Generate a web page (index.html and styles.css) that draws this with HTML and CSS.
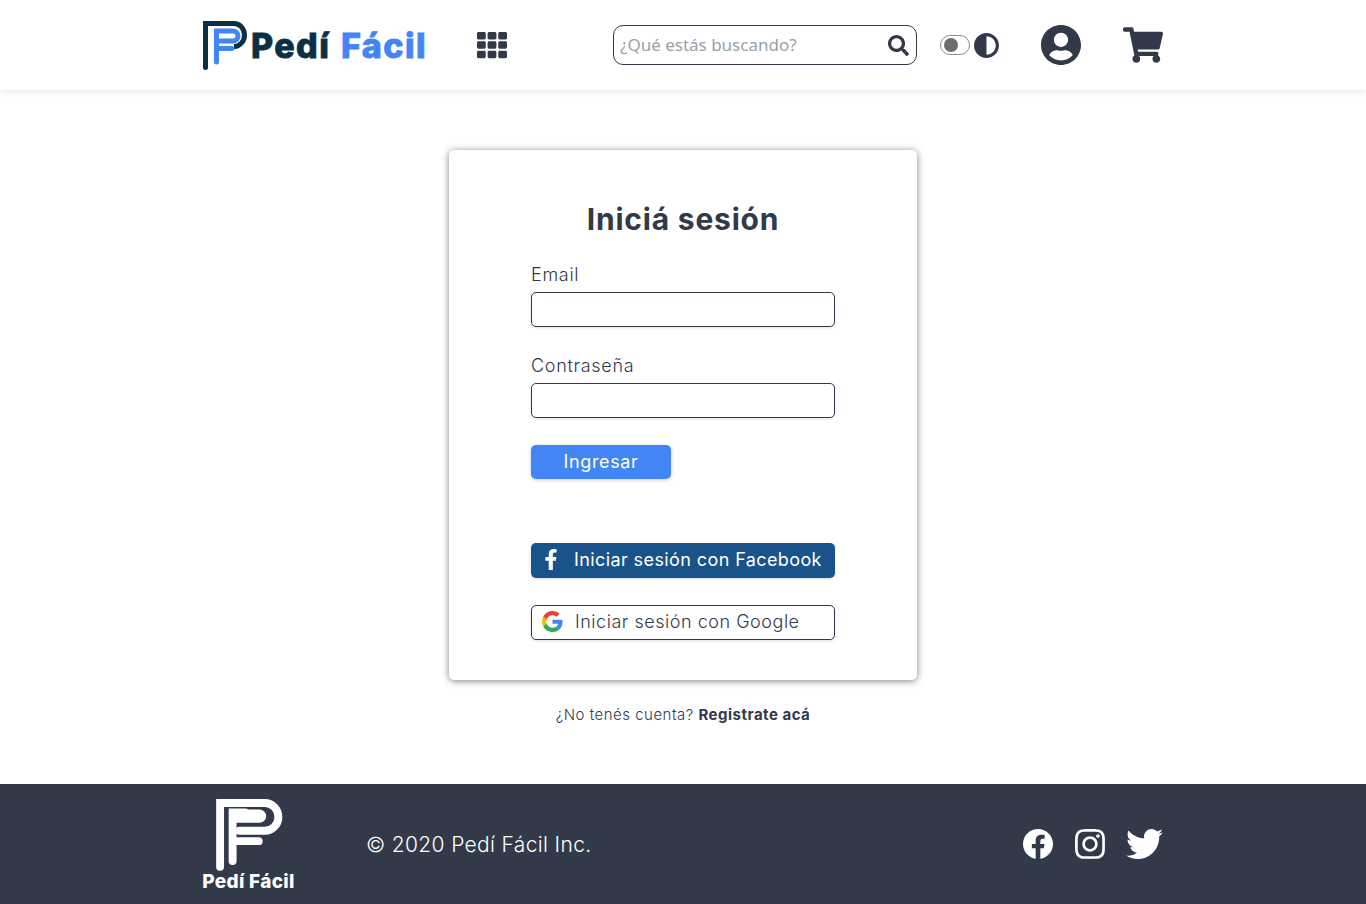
FILE: index.html
```html
<!DOCTYPE html>
<html lang="es">
<head>
    <meta charset="UTF-8">
    <meta name="viewport" content="width=device-width, initial-scale=1.0">
    <title>Pedí Fácil</title>
    <link rel="stylesheet" href="styles.css">
</head>
<body>

<!-- Barra superior -->
<header class="topbar">
    <div class="wrap topbar-row">
        <a class="brand" href="#">
            <svg class="brand-mark" viewBox="0 0 45 49" stroke-width="5" stroke-linecap="round">
                <path class="mark-dark" d="M2.500 46.500V2.500H31a10.500 11.500 0 0 1 0 23H33"/>
                <path class="mark-blue" d="M13.500 41V10H30a5 5 0 0 1 0 10H16M13.500 27.500H29"/>
            </svg>
            <span class="brand-name">Pedí <span class="brand-blue">Fácil</span></span>
        </a>
        <a class="categories" href="#">
            <svg class="icon-grid" viewBox="0 0 512 512"><path d="M149.333 56v80c0 13.255-10.745 24-24 24H24c-13.255 0-24-10.745-24-24V56c0-13.255 10.745-24 24-24h101.333c13.255 0 24 10.745 24 24zm181.334 240v-80c0-13.255-10.745-24-24-24H205.333c-13.255 0-24 10.745-24 24v80c0 13.255 10.745 24 24 24h101.333c13.256 0 24.001-10.745 24.001-24zm32-240v80c0 13.255 10.745 24 24 24H488c13.255 0 24-10.745 24-24V56c0-13.255-10.745-24-24-24H387.333c-13.255 0-24 10.745-24 24zm-32 80V56c0-13.255-10.745-24-24-24H205.333c-13.255 0-24 10.745-24 24v80c0 13.255 10.745 24 24 24h101.333c13.256 0 24.001-10.745 24.001-24zm-205.334 56H24c-13.255 0-24 10.745-24 24v80c0 13.255 10.745 24 24 24h101.333c13.255 0 24-10.745 24-24v-80c0-13.255-10.745-24-24-24zM0 376v80c0 13.255 10.745 24 24 24h101.333c13.255 0 24-10.745 24-24v-80c0-13.255-10.745-24-24-24H24c-13.255 0-24 10.745-24 24zm386.667-56H488c13.255 0 24-10.745 24-24v-80c0-13.255-10.745-24-24-24H386.667c-13.255 0-24 10.745-24 24v80c0 13.255 10.745 24 24 24zm0 160H488c13.255 0 24-10.745 24-24v-80c0-13.255-10.745-24-24-24H386.667c-13.255 0-24 10.745-24 24v80c0 13.255 10.745 24 24 24zM181.333 376v80c0 13.255 10.745 24 24 24h101.333c13.255 0 24-10.745 24-24v-80c0-13.255-10.745-24-24-24H205.333c-13.255 0-24 10.745-24 24z"/></svg>
        </a>
        <form class="search">
            <input class="search-input" type="text" placeholder="¿Qué estás buscando?">
            <svg class="icon-search" viewBox="0 0 512 512"><path d="M505 442.700L405.300 343c-4.500-4.500-10.600-7-17-7H372c27.600-35.300 44-79.700 44-128C416 93.100 322.900 0 208 0S0 93.100 0 208s93.100 208 208 208c48.300 0 92.700-16.400 128-44v16.300c0 6.400 2.500 12.500 7 17l99.700 99.700c9.400 9.400 24.600 9.400 33.900 0l28.300-28.300c9.400-9.400 9.400-24.600.1-34zM208 336c-70.700 0-128-57.200-128-128 0-70.700 57.200-128 128-128 70.700 0 128 57.200 128 128 0 70.700-57.200 128-128 128z"/></svg>
        </form>
        <div class="theme">
            <span class="switch"><span class="switch-dot"></span></span>
            <svg class="icon-adjust" viewBox="8 8 496 496"><path d="M8 256c0 136.966 111.033 248 248 248s248-111.034 248-248S392.966 8 256 8 8 119.033 8 256zm248 184V72c101.705 0 184 82.311 184 184 0 101.705-82.311 184-184 184z"/></svg>
        </div>
        <a class="account" href="#">
            <svg class="icon-user" viewBox="0 8 496 496"><path d="M248 8C111 8 0 119 0 256s111 248 248 248 248-111 248-248S385 8 248 8zm0 96c48.600 0 88 39.400 88 88s-39.400 88-88 88-88-39.400-88-88 39.400-88 88-88zm0 344c-58.700 0-111.300-26.600-146.500-68.200 18.800-35.400 55.600-59.800 98.500-59.800 2.400 0 4.800.4 7.100 1.100 13 4.200 26.600 6.900 40.900 6.900 14.300 0 28-2.700 40.900-6.900 2.300-.7 4.700-1.100 7.100-1.100 42.900 0 79.700 24.400 98.500 59.800C359.300 421.400 306.700 448 248 448z"/></svg>
        </a>
        <a class="cart" href="#">
            <svg class="icon-cart" viewBox="0 0 576 512"><path d="M528.120 301.319l47.273-208C578.806 78.301 567.391 64 551.990 64H159.208l-9.166-44.810C147.758 8.021 137.930 0 126.529 0H24C10.745 0 0 10.745 0 24v16c0 13.255 10.745 24 24 24h69.883l70.248 343.435C147.325 417.100 136 435.222 136 456c0 30.928 25.072 56 56 56s56-25.072 56-56c0-15.674-6.447-29.835-16.824-40h209.647C430.447 426.165 424 440.326 424 456c0 30.928 25.072 56 56 56s56-25.072 56-56c0-22.172-12.888-41.332-31.579-50.405l5.517-24.276c3.413-15.018-8.002-29.319-23.403-29.319H218.117l-6.545-32h293.145c11.206 0 20.920-7.754 23.403-18.681z"/></svg>
        </a>
    </div>
</header>

<!-- Formulario de ingreso -->
<main class="content">
    <form class="card">
        <h1 class="card-title">Iniciá sesión</h1>

        <label class="field-label" for="email">Email</label>
        <input class="field" type="email" id="email" name="email">

        <label class="field-label field-label-next" for="password">Contraseña</label>
        <input class="field" type="password" id="password" name="password">

        <button class="btn-submit" type="button">Ingresar</button>

        <a class="btn-social btn-facebook" href="#">
            <span class="social-slot">
                <svg class="icon-fb-f" viewBox="0 0 320 512"><path d="M279.140 288l14.220-92.660h-88.910v-60.130c0-25.350 12.420-50.060 52.240-50.060h40.420V6.260S260.430 0 225.360 0c-73.220 0-121.080 44.380-121.080 124.720v70.620H22.890V288h81.390v224h100.170V288z"/></svg>
            </span>
            Iniciar sesión con Facebook
        </a>
        <a class="btn-social btn-google" href="#">
            <span class="social-slot">
                <svg class="icon-google" viewBox="0 0 48 48">
                    <path fill="#EA4335" d="M24 9.500c3.540 0 6.710 1.220 9.210 3.600l6.850-6.850C35.900 2.380 30.470 0 24 0 14.620 0 6.510 5.380 2.560 13.220l7.980 6.190C12.430 13.720 17.740 9.500 24 9.500z"/>
                    <path fill="#4285F4" d="M46.980 24.550c0-1.570-.15-3.090-.38-4.550H24v9.020h12.940c-.58 2.960-2.260 5.480-4.780 7.180l7.730 6c4.510-4.180 7.090-10.360 7.090-17.650z"/>
                    <path fill="#FBBC05" d="M10.530 28.590c-.48-1.450-.76-2.990-.76-4.590s.27-3.140.76-4.590l-7.980-6.190C.92 16.460 0 20.120 0 24c0 3.880.92 7.540 2.560 10.780l7.970-6.190z"/>
                    <path fill="#34A853" d="M24 48c6.480 0 11.930-2.130 15.890-5.810l-7.730-6c-2.150 1.450-4.920 2.300-8.160 2.300-6.260 0-11.570-4.220-13.470-9.910l-7.980 6.190C6.510 42.620 14.620 48 24 48z"/>
                </svg>
            </span>
            Iniciar sesión con Google
        </a>
    </form>
    <p class="signup">¿No tenés cuenta? <a class="signup-link" href="#">Registrate acá</a></p>
</main>

<!-- Pie de página -->
<footer class="footer">
    <div class="wrap footer-row">
        <div class="footer-brand">
            <svg class="footer-mark" viewBox="0 0 45 49" stroke-width="5.300" stroke-linecap="round">
                <path d="M3.100 45.500V2.650H33a9.200 9.350 0 0 1 0 18.700H16"/>
                <path d="M11.500 41.700V9H20M11.500 28.300H29"/>
                <path d="M14 11.500H29.500" stroke-width="9"/>
            </svg>
            <span class="footer-name">Pedí Fácil</span>
        </div>
        <p class="copyright">© 2020 Pedí Fácil Inc.</p>
        <div class="social">
            <svg class="social-fb" viewBox="8 8 496 496"><path d="M504 256C504 119 393 8 256 8S8 119 8 256c0 123.780 90.690 226.380 209.250 245V327.690h-63V256h63v-54.640c0-62.150 37-96.480 93.670-96.480 27.140 0 55.520 4.840 55.520 4.840v61h-31.280c-30.800 0-40.410 19.120-40.410 38.730V256h68.780l-11 71.690h-57.780V501C413.310 482.380 504 379.780 504 256z"/></svg>
            <svg class="social-ig" viewBox="0 31 448 450"><path d="M224.100 141c-63.600 0-114.900 51.300-114.900 114.900s51.300 114.900 114.900 114.900S339 319.500 339 255.900 287.700 141 224.100 141zm0 189.600c-41.100 0-74.700-33.500-74.700-74.700s33.500-74.700 74.700-74.700 74.700 33.500 74.700 74.700-33.600 74.700-74.700 74.700zm146.400-194.300c0 14.900-12 26.800-26.800 26.800-14.900 0-26.800-12-26.800-26.800s12-26.800 26.800-26.800 26.800 12 26.800 26.800zm76.100 27.200c-1.700-35.900-9.900-67.700-36.200-93.900-26.200-26.200-58-34.400-93.900-36.200-37-2.100-147.900-2.100-184.900 0-35.800 1.700-67.600 9.900-93.900 36.100s-34.400 58-36.200 93.900c-2.100 37-2.100 147.900 0 184.900 1.700 35.900 9.900 67.700 36.200 93.900s58 34.400 93.900 36.200c37 2.100 147.900 2.100 184.900 0 35.900-1.700 67.700-9.900 93.900-36.200 26.200-26.200 34.400-58 36.200-93.900 2.100-37 2.100-147.800 0-184.800zM398.800 388c-7.800 19.600-22.900 34.700-42.600 42.600-29.500 11.700-99.500 9-132.100 9s-102.700 2.600-132.100-9c-19.600-7.800-34.700-22.900-42.600-42.600-11.700-29.500-9-99.500-9-132.100s-2.600-102.700 9-132.100c7.800-19.600 22.900-34.700 42.600-42.600 29.500-11.700 99.500-9 132.100-9s102.700-2.600 132.100 9c19.600 7.800 34.700 22.900 42.600 42.600 11.700 29.500 9 99.500 9 132.100s2.700 102.700-9 132.100z"/></svg>
            <svg class="social-tw" viewBox="0 48 512 416"><path d="M459.370 151.716c.325 4.548.325 9.097.325 13.645 0 138.720-105.583 298.558-298.558 298.558-59.452 0-114.680-17.219-161.137-47.106 8.447.974 16.568 1.299 25.340 1.299 49.055 0 94.213-16.568 130.274-44.832-46.132-.975-84.792-31.188-98.112-72.772 6.498.974 12.995 1.624 19.818 1.624 9.421 0 18.843-1.300 27.614-3.573-48.081-9.747-84.143-51.980-84.143-102.985v-1.299c13.969 7.797 30.214 12.670 47.431 13.319-28.264-18.843-46.781-51.005-46.781-87.391 0-19.492 5.197-37.360 14.294-52.954 51.655 63.675 129.300 105.258 216.365 109.807-1.624-7.797-2.599-15.918-2.599-24.040 0-57.828 46.782-104.934 104.934-104.934 30.213 0 57.502 12.670 76.670 33.137 23.715-4.548 46.456-13.645 66.599-25.340-7.798 24.366-24.366 44.833-46.132 57.827 21.117-2.273 41.584-8.122 60.426-16.243-14.292 20.791-32.161 39.308-52.628 54.253z"/></svg>
        </div>
    </div>
</footer>

</body>
</html>
```

FILE: styles.css
```css
* {
    box-sizing: border-box;
}
body {
    margin: 0;
    font-family: Inter, "Open Sans", sans-serif;
    color: #323a49;
    background-color: #fff;
}
a {
    color: inherit;
    text-decoration: none;
}
svg {
    display: block;
    fill: currentColor;
}
.wrap {
    width: 960px;
    margin: 0 auto;
}

/* barra superior */
.topbar {
    position: relative;
    height: 90px;
    background-color: #fff;
    box-shadow: 0 1px 6px rgba(0, 0, 0, 0.12);
}
.topbar-row {
    display: flex;
    align-items: center;
    height: 90px;
}
.brand {
    display: flex;
    align-items: center;
    width: 223px;
    height: 49px;
}
.brand-mark {
    flex: none;
    width: 45px;
    height: 49px;
    fill: none;
}
.mark-dark {
    stroke: #0b3045;
}
.mark-blue {
    stroke: #4285f4;
}
.brand-name {
    margin-left: 3px;
    font-size: 34px;
    font-weight: 800;
    letter-spacing: 1.4px;
    white-space: nowrap;
    color: #0b3045;
    -webkit-text-stroke: 0.8px currentColor;
}
.brand-blue {
    margin-left: 2px;
    color: #4285f4;
}
.categories {
    margin-left: 51px;
}
.icon-grid {
    width: 30px;
    height: 30px;
}
.search {
    display: flex;
    align-items: center;
    width: 304px;
    height: 40px;
    margin-left: 106px;
    padding: 0 7px 0 6px;
    border: 1px solid #323a49;
    border-radius: 10px;
}
.search-input {
    flex: 1;
    min-width: 0;
    padding: 0 0 2px;
    border: none;
    outline: none;
    font-family: "Noto Sans", sans-serif;
    font-size: 17px;
}
.search-input::placeholder {
    color: #9a9fa8;
}
.icon-search {
    width: 21px;
    height: 21px;
}
.theme {
    display: flex;
    align-items: center;
    margin-left: 23px;
}
.switch {
    display: flex;
    align-items: center;
    width: 30px;
    height: 20px;
    padding-left: 3px;
    border: 1px solid #8d8d8d;
    border-radius: 10px;
}
.switch-dot {
    width: 14px;
    height: 14px;
    border-radius: 50%;
    background-color: #6d6d6d;
}
.icon-adjust {
    width: 25px;
    height: 25px;
    margin-left: 4px;
}
.account {
    margin-left: 42px;
}
.icon-user {
    width: 40px;
    height: 40px;
}
.cart {
    margin-left: 42px;
}
.icon-cart {
    width: 40px;
    height: 36px;
}

/* tarjeta de ingreso */
.content {
    padding: 60px 0 59px;
}
.card {
    display: flex;
    flex-direction: column;
    width: 468px;
    margin: 0 auto;
    padding: 50px 82px 40px;
    border-radius: 5px;
    box-shadow: 0 1px 7px rgba(0, 0, 0, 0.5);
}
.card-title {
    margin: 0 0 25px;
    font-size: 30px;
    font-weight: 700;
    line-height: 38px;
    letter-spacing: 0.8px;
    text-align: center;
}
.field-label {
    margin-bottom: 5px;
    font-size: 18px;
    font-weight: 300;
    line-height: 24px;
    letter-spacing: 0.7px;
}
.field-label-next {
    margin-top: 27px;
}
.field {
    height: 35px;
    border: 1px solid #323a49;
    border-radius: 5px;
    box-shadow: 0 1px 3px rgba(0, 0, 0, 0.12);
}
.btn-submit {
    width: 140px;
    height: 34px;
    margin-top: 27px;
    padding: 0 0 2px;
    border: none;
    border-radius: 5px;
    font-family: inherit;
    font-size: 18px;
    letter-spacing: 0.65px;
    color: #fff;
    background-color: #4285f4;
    box-shadow: 0 1px 4px rgba(0, 0, 0, 0.2);
    cursor: pointer;
}
.btn-social {
    display: flex;
    align-items: center;
    height: 35px;
    padding-bottom: 2px;
    border-radius: 5px;
    font-size: 18px;
    font-weight: 400;
    letter-spacing: 0.4px;
    white-space: nowrap;
    box-shadow: 0 1px 3px rgba(0, 0, 0, 0.15);
}
.social-slot {
    display: flex;
    justify-content: center;
    flex: none;
    width: 40px;
    margin-right: 3px;
}
.btn-facebook {
    margin-top: 64px;
    color: #fff;
    background-color: #1a5389;
}
.btn-google {
    margin-top: 27px;
    font-weight: 300;
    letter-spacing: 0.53px;
    border: 1px solid #323a49;
}
.icon-fb-f {
    width: 14px;
    height: 21px;
}
.icon-google {
    width: 21px;
    height: 21px;
}
.signup {
    margin: 25px 0 0;
    font-size: 15px;
    font-weight: 300;
    line-height: 20px;
    letter-spacing: 0.5px;
    text-align: center;
}
.signup-link {
    font-weight: 700;
}

/* pie de página */
.footer {
    height: 120px;
    color: #fff;
    background-color: #323a49;
}
.footer-row {
    display: flex;
    align-items: center;
    height: 120px;
}
.footer-brand {
    display: flex;
    flex-direction: column;
    align-items: center;
    width: 91px;
    padding-top: 3px;
}
.footer-mark {
    width: 68px;
    height: 73px;
    fill: none;
    stroke: #fff;
}
.footer-name {
    font-size: 19px;
    font-weight: 800;
    line-height: 20px;
    letter-spacing: 0.3px;
    white-space: nowrap;
}
.copyright {
    margin: 0 0 0 72px;
    font-size: 21px;
    font-weight: 300;
    letter-spacing: 0.35px;
}
.social {
    display: flex;
    align-items: center;
    margin-left: auto;
}
.social-fb {
    width: 30px;
    height: 30px;
}
.social-ig {
    width: 30px;
    height: 30px;
    margin-left: 22px;
}
.social-tw {
    width: 37px;
    height: 30px;
    margin-left: 21px;
}
```
